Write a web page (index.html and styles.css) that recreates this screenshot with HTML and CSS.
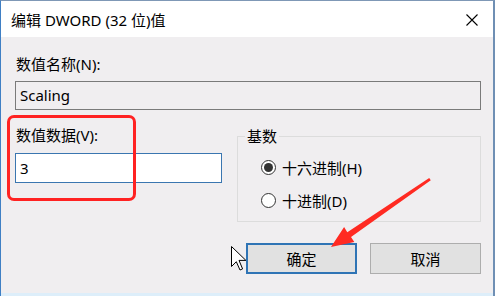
FILE: index.html
```html
<!DOCTYPE html>
<html lang="zh-CN">
<head>
<meta charset="utf-8">
<title>编辑 DWORD (32 位)值</title>
<link rel="stylesheet" href="styles.css">
</head>
<body>
<div class="window">
  <div class="titlebar">
    <span class="title">编辑 DWORD (32 位)值</span>
    <svg class="close" width="12" height="12" viewBox="0 0 12 12"><path d="M0.5 0.5 L11.5 11.5 M11.5 0.5 L0.5 11.5" stroke="#000" stroke-width="1.1" fill="none"/></svg>
  </div>
  <div class="content">
    <div class="label name-label">数值名称(N):</div>
    <div class="field readonly">Scaling</div>
    <div class="row">
      <div class="data-col">
        <div class="label data-label">数值数据(V):</div>
        <div class="field data-field">3</div>
      </div>
      <fieldset class="group">
        <legend class="legend">基数</legend>
        <div class="radio-row"><span class="radio checked"></span><span class="radio-text">十六进制(H)</span></div>
        <div class="radio-row"><span class="radio"></span><span class="radio-text">十进制(D)</span></div>
      </fieldset>
    </div>
    <div class="buttons">
      <div class="btn default">确定</div>
      <div class="btn">取消</div>
    </div>
  </div>
  <div class="strip"></div>

  <div class="highlight"></div>
  <svg class="overlay" width="495" height="296" viewBox="0 0 495 296">
    <polygon points="331,247 344.1,227.1 347.3,232.2 429.2,178 430.8,180.2 351,237 354.3,241.9" fill="#ff2a22"/>
    <path d="M231.5 246.5 L231.5 266.5 L236.3 261.7 L240 270 L242.6 268.9 L239 260.4 L245.9 260.4 Z" fill="#fff" stroke="#000" stroke-width="1" stroke-linejoin="round"/>
  </svg>
</div>
</body>
</html>
```
FILE: styles.css
```css
* { box-sizing: border-box; }
html, body { margin: 0; padding: 0; }
body {
  width: 495px;
  height: 296px;
  overflow: hidden;
  font-family: "Noto Sans", "Noto Sans CJK SC", sans-serif;
  color: #000;
}
.window {
  position: relative;
  width: 495px;
  height: 296px;
  display: flex;
  flex-direction: column;
  border-left: 1px solid #3f7fc4;
  border-right: 2px solid #6f8fb4;
  border-top: 1px solid #7f98b6;
  background: #f0eef0;
}
.titlebar {
  height: 36px;
  background: #fff;
  display: flex;
  align-items: center;
  justify-content: space-between;
  padding: 0 15px 0 10px;
  flex: none;
}
.title {
  font-size: 15px;
  line-height: 20px;
  margin-top: 2px;
}
.close { display: block; margin-top: 2px; }
.content {
  flex: 1;
  padding: 17px 12px 0 14px;
  display: flex;
  flex-direction: column;
}
.label {
  font-size: 15px;
  line-height: 20px;
}
.name-label { margin-left: 1px; }
.field {
  height: 29px;
  border: 1px solid #7a7a7a;
  font-size: 15px;
  line-height: 27px;
  padding-left: 4px;
}
.readonly {
  margin-top: 7px;
  background: #f0eef0;
}
.row {
  display: flex;
  align-items: flex-start;
  margin-top: 5px;
}
.data-col {
  width: 207px;
  padding-top: 10px;
}
.data-label { margin-left: 1px; }
.data-field {
  margin-top: 8px;
  background: #fff;
  border-color: #3a76b0;
  height: 30px;
  line-height: 28px;
}
.group {
  margin: 11px 0 0 15px;
  width: 244px;
  height: 96px;
  border: 1px solid #dcdcdc;
  padding: 5px 0 0 23px;
  min-width: 0;
}
.legend {
  font-size: 15px;
  line-height: 20px;
  padding: 0 2px;
  margin-left: -16px;
}
.radio-row {
  display: flex;
  align-items: center;
  height: 33px;
}
.radio {
  width: 15px;
  height: 15px;
  border: 1px solid #333;
  border-radius: 50%;
  background: #fff;
  display: flex;
  align-items: center;
  justify-content: center;
  flex: none;
}
.radio.checked::after {
  content: "";
  width: 9px;
  height: 9px;
  border-radius: 50%;
  background: #333;
}
.radio-text {
  font-size: 15px;
  margin-left: 6px;
}
.buttons {
  display: flex;
  justify-content: flex-end;
  gap: 13px;
  margin-top: 21px;
}
.btn {
  width: 111px;
  height: 31px;
  border: 1px solid #adadad;
  background: #e1e1e1;
  font-size: 15px;
  display: flex;
  align-items: center;
  justify-content: center;
}
.btn.default {
  border: 2px solid #2f74b5;
}
.strip {
  height: 3px;
  background: #ddeefa;
  flex: none;
}
.highlight {
  position: absolute;
  left: 6px;
  top: 114px;
  width: 129px;
  height: 86px;
  border: 3.5px solid #ff2222;
  border-radius: 7px;
}
.overlay {
  position: absolute;
  left: -1px;
  top: -1px;
  pointer-events: none;
}
```
